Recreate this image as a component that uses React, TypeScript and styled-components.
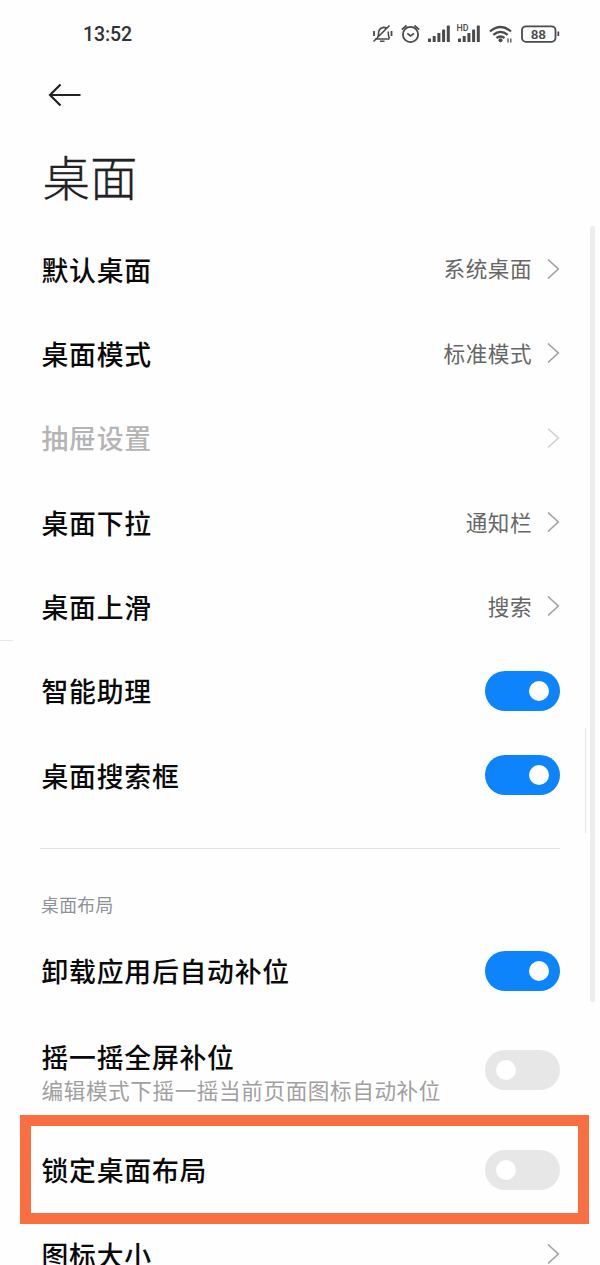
import React from "react";
import styled, { createGlobalStyle } from "styled-components";

const GlobalStyle = createGlobalStyle`
  * { box-sizing: border-box; }
  html, body { margin: 0; padding: 0; background: #fefefe; overflow: hidden; }
  body { font-family: "Noto Sans CJK SC", sans-serif; }
`;

const Screen = styled.main`
  position: relative;
  width: 600px;
  height: 1265px;
  overflow: hidden;
  background: #fefefe;
`;

const StatusBar = styled.header`
  height: 68px;
  padding: 0 40px 0 83px;
  display: flex;
  align-items: center;
  justify-content: space-between;
`;

const Clock = styled.span`
  font: 500 19.5px/30px Roboto, sans-serif;
  letter-spacing: -0.1px;
  padding-top: 1px;
  color: #333;
`;

const StatusIcons = styled.svg`
  display: block;
  width: 190px;
  height: 24px;
`;

const NavBar = styled.nav`
  height: 54px;
  padding-left: 48px;
  display: flex;
  align-items: center;
`;

const BackButton = styled.button`
  padding: 0;
  border: 0;
  background: none;
  svg { display: block; }
`;

const PageTitle = styled.h1`
  margin: 0;
  height: 104.8px;
  padding: 19px 0 0 42.5px;
  font-size: 47.5px;
  line-height: 70px;
  font-weight: 300;
  -webkit-text-stroke: 0.3px #222;
  color: #222;
`;

const Row = styled.div<{ $tall?: boolean }>`
  height: ${(p) => (p.$tall ? 114.6 : 84.35)}px;
  padding: 0 40px 0 41.5px;
  display: flex;
  align-items: center;
  justify-content: space-between;
`;

const Texts = styled.div<{ $double?: boolean }>`
  display: flex;
  flex-direction: column;
  padding-top: ${(p) => (p.$double ? 3 : 0)}px;
`;

const Label = styled.span<{ $disabled?: boolean }>`
  font-size: 26.8px;
  line-height: 36px;
  font-weight: 500;
  letter-spacing: 0.8px;
  padding-top: 1.5px;
  white-space: nowrap;
  color: ${(p) => (p.$disabled ? "#b4b4b4" : "#0a0a0a")};
`;

const Summary = styled.span`
  font-size: 21.6px;
  line-height: 32px;
  letter-spacing: 0.6px;
  margin-top: -1.5px;
  white-space: nowrap;
  color: #a0a0a0;
`;

const Trailing = styled.div`
  display: flex;
  align-items: center;
  gap: 15px;
`;

const Value = styled.span`
  font-size: 21.6px;
  line-height: 32px;
  letter-spacing: 0.5px;
  padding-bottom: 1px;
  color: #666;
`;

const Track = styled.span<{ $on?: boolean }>`
  width: 75px;
  height: 40px;
  padding: 0 11px;
  border-radius: 20px;
  display: flex;
  align-items: center;
  justify-content: ${(p) => (p.$on ? "flex-end" : "flex-start")};
  background: ${(p) => (p.$on ? "#0d84fb" : "#e7e7e7")};
`;

const Knob = styled.span`
  width: 20px;
  height: 20px;
  border-radius: 50%;
  background: #fff;
`;

const Divider = styled.hr`
  width: 520px;
  height: 1.5px;
  margin: 30.6px 0 0 40px;
  border: 0;
  background: #e2e2e2;
`;

const SectionLabel = styled.h2`
  margin: 0;
  height: 79.2px;
  padding: 40.5px 0 0 41px;
  font-size: 17.8px;
  line-height: 28px;
  font-weight: 400;
  letter-spacing: 0.4px;
  color: #8e9199;
`;

const Scrollbar = styled.div`
  position: absolute;
  left: 590px;
  top: 226px;
  width: 5px;
  height: 776px;
  border-radius: 2px;
  background: #ededed;
`;

const SideHairline = styled.div`
  position: absolute;
  left: 585px;
  top: 728px;
  width: 1px;
  height: 105px;
  background: #e6e4e2;
`;

const EdgeTick = styled.div`
  position: absolute;
  left: 0;
  top: 640px;
  width: 13px;
  height: 1px;
  background: #e8e8e8;
`;

const Highlight = styled.div`
  position: absolute;
  left: 20px;
  top: 1115px;
  width: 569px;
  height: 109px;
  border: 11px solid #fa6f42;
`;

function Chevron({ faded = false }: { faded?: boolean }) {
  return (
    <svg width="13" height="22" viewBox="0 0 13 22" fill="none">
      <path d="M1 1.500 11.300 11 1 20.500" stroke={faded ? "#d0d0d0" : "#a0a0a0"} strokeWidth="1.600" />
    </svg>
  );
}

function Switch({ on = false }: { on?: boolean }) {
  return (
    <Track $on={on} role="switch" aria-checked={on}>
      <Knob />
    </Track>
  );
}

function LinkRow({ label, value, disabled }: { label: string; value?: string; disabled?: boolean }) {
  return (
    <Row>
      <Label $disabled={disabled}>{label}</Label>
      <Trailing>
        {value && <Value>{value}</Value>}
        <Chevron faded={disabled} />
      </Trailing>
    </Row>
  );
}

function SwitchRow({ label, summary, on }: { label: string; summary?: string; on?: boolean }) {
  return (
    <Row $tall={!!summary}>
      <Texts $double={!!summary}>
        <Label>{label}</Label>
        {summary && <Summary>{summary}</Summary>}
      </Texts>
      <Switch on={on} />
    </Row>
  );
}

const bars = [
  [0, 3.5], [4.7, 6], [9.4, 9], [14.1, 12.5], [18.8, 16.5],
];

function Status() {
  return (
    <StatusIcons viewBox="370 22 190 24" fill="none" stroke="#4a4a4a" strokeWidth="1.6">
      <path d="M375 39h14.500M377 38.500c1.700-2 1.700-4 1.700-6.500a5 5 0 0 1 8-3.500M388.300 31.500v2c0 2 .3 3.500 1.200 5M380 41.300h4.500M389.500 25.500 373.500 41.500" />
      <path d="M374 31v5M391.500 31v5" strokeWidth="1.800" />
      <circle cx="410.500" cy="34.500" r="7.600" strokeWidth="1.800" />
      <path d="M407.300 33.300l3.200 2.700 3.500-2.700M401.800 29.700l4.700-4.200M419.200 29.700l-4.700-4.200" strokeWidth="1.700" />
      <g fill="#4a4a4a" stroke="none">
        {bars.map(([x, h]) => <rect key={x} x={428 + x} y={42 - h} width="3" height={h} rx=".5" />)}
        {bars.map(([x, h]) => <rect key={x} x={458 + x} y={42 - h} width="3" height={h} rx=".5" />)}
        <text x="456.500" y="31.300" fontSize="8.800" fontFamily="Roboto, sans-serif" fontWeight="500">HD</text>
        <circle cx="500.500" cy="40.300" r="2" />
        <text x="531" y="38.700" fontSize="13" fontFamily="Liberation Sans, sans-serif" fontWeight="700" letterSpacing=".2">88</text>
      </g>
      <path d="M490 31.500q10.500-9 21 0M493.300 34.800q7.200-6 14.400 0M496.500 38q4-3 8 0" strokeWidth="2.200" />
      <path d="M508 38.500v4M510.800 38.500v4" strokeWidth="1.300" />
      <rect x="522" y="26.300" width="33.500" height="15.500" rx="4" strokeWidth="1.800" />
      <path d="M558.300 31.500v4.500" strokeWidth="1.800" />
    </StatusIcons>
  );
}

export default function App() {
  return (
    <Screen>
      <GlobalStyle />
      <StatusBar>
        <Clock>13:52</Clock>
        <Status />
      </StatusBar>
      <NavBar>
        <BackButton aria-label="返回">
          <svg width="34" height="24" viewBox="0 0 34 24" fill="none" stroke="#222" strokeWidth="2.200">
            <path d="M32.500 12H2M12.500 1.500 2 12l10.500 10.500" />
          </svg>
        </BackButton>
      </NavBar>
      <PageTitle>桌面</PageTitle>
      <LinkRow label="默认桌面" value="系统桌面" />
      <LinkRow label="桌面模式" value="标准模式" />
      <LinkRow label="抽屉设置" disabled />
      <LinkRow label="桌面下拉" value="通知栏" />
      <LinkRow label="桌面上滑" value="搜索" />
      <SwitchRow label="智能助理" on />
      <SwitchRow label="桌面搜索框" on />
      <Divider />
      <SectionLabel>桌面布局</SectionLabel>
      <SwitchRow label="卸载应用后自动补位" on />
      <SwitchRow label="摇一摇全屏补位" summary="编辑模式下摇一摇当前页面图标自动补位" />
      <SwitchRow label="锁定桌面布局" />
      <LinkRow label="图标大小" />
      <Scrollbar />
      <SideHairline />
      <EdgeTick />
      <Highlight />
    </Screen>
  );
}
